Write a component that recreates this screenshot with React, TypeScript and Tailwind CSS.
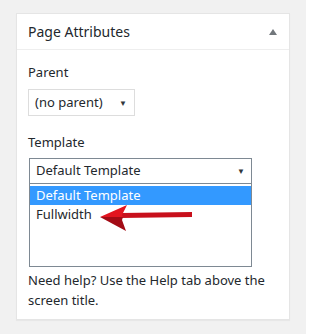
import React from "react";

const App: React.FC = () => {
  return (
    <div
      className="w-[306px] h-[334px] bg-[#f1f1f1] pt-[13px] px-[16px] text-[#23282d]"
      style={{ fontFamily: '"Noto Sans", "Open Sans", sans-serif' }}
    >
      <div className="bg-white border border-[#e5e5e5] shadow-[0_1px_1px_rgba(0,0,0,0.04)] h-[307px]">
        <div className="h-[36px] flex items-center justify-between px-[11px] border-b border-[#eeeeee]">
          <h2 className="text-[14px] leading-none">Page Attributes</h2>
          <span className="w-0 h-0 border-l-[4px] border-r-[4px] border-b-[6px] border-l-transparent border-r-transparent border-b-[#72777c] mr-[1px]" />
        </div>
        <div className="px-[11px] pt-[13px] relative">
          <p className="text-[13px] leading-[18px]">Parent</p>
          <div className="mt-[8px] w-[107px] h-[27px] border border-[#dddddd] flex items-center justify-between pl-[6px] pr-[7px] text-[13px]">
            <span>(no parent)</span>
            <span className="text-[8px] text-[#32373c]">▼</span>
          </div>
          <p className="text-[13px] leading-[18px] mt-[17px]">Template</p>
          <div className="mt-[7px] w-[223px] ml-[1px] border border-[#7e8993]">
            <div className="h-[25px] flex items-center justify-between pl-[6px] pr-[6px] text-[13px] border-b border-[#7e8993]">
              <span>Default Template</span>
              <span className="text-[8px] text-[#32373c]">▼</span>
            </div>
            <div className="h-[82px] pt-[2px] text-[13px]">
              <div className="h-[19px] bg-[#3399ff] text-white flex items-center pl-[6px]">Default Template</div>
              <div className="h-[20px] flex items-center pl-[6px]">Fullwidth</div>
            </div>
          </div>
          <p className="text-[13px] leading-[20px] mt-[3px] w-[250px]">Need help? Use the Help tab above the screen title.</p>
          <svg
            className="absolute left-[82px] top-[153px]"
            width="96"
            height="30"
            viewBox="0 0 96 30"
          >
            <path d="M22 10 L93 9 L93 14 L22 15 Z" fill="#c8101c" />
            <path d="M1 14 L28 2 L23 12 L24 14 Z" fill="#e2141f" />
            <path d="M1 14 L24 14 L23 17 L27 28 Z" fill="#a30b15" />
          </svg>
        </div>
      </div>
    </div>
  );
};

export default App;
